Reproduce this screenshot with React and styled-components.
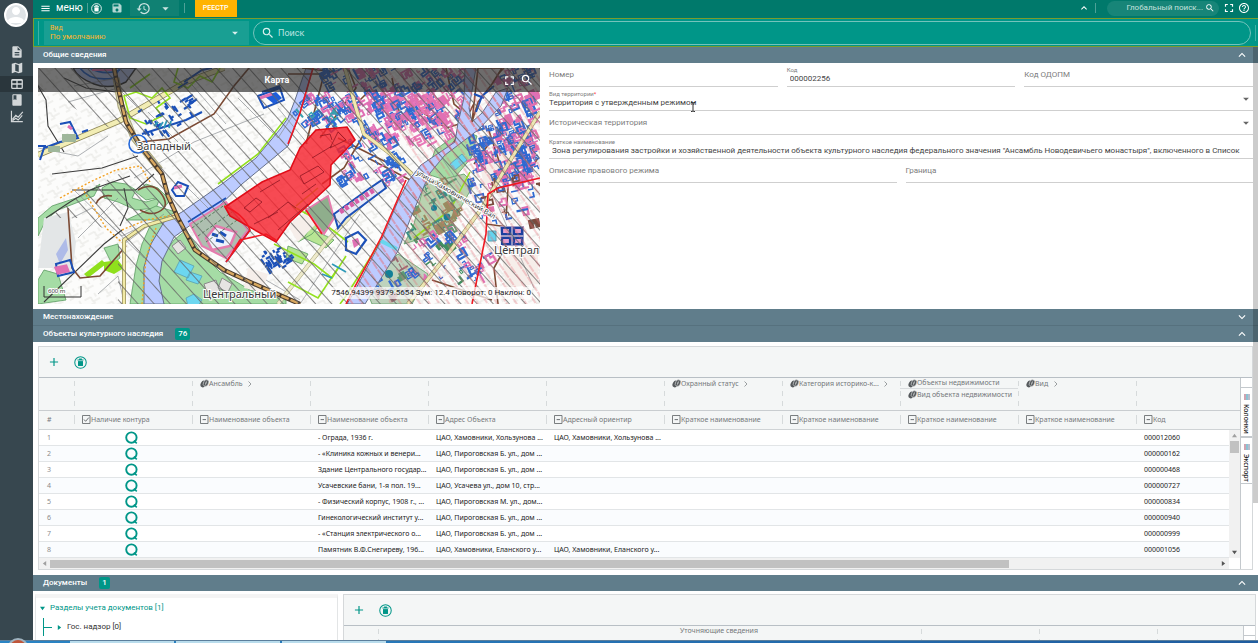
import React from 'react';
import styled, { createGlobalStyle, css } from 'styled-components';
import {
  MdMenu, MdSave, MdHistory, MdArrowDropDown, MdExpandLess, MdExpandMore, MdSearch,
  MdFullscreen, MdHelpOutline, MdAdd, MdDescription, MdMap, MdBook, MdPerson,
} from 'react-icons/md';

const teal = '#009688';
const ui = 'Roboto, "Liberation Sans", sans-serif';
const gridFont = '"Noto Sans", "Open Sans", sans-serif';

const Global = createGlobalStyle`
  *, *::before, *::after { box-sizing: border-box; }
  body { margin: 0; font: 8px/12px ${ui}; color: #444; background: #fff; }
  button, input, select { font: inherit; color: inherit; background: none; border: 0; padding: 0; margin: 0; outline: 0; border-radius: 0; }
  svg { display: block; flex: none; }
`;

const Screen = styled.div`
  display: flex;
  flex-direction: column;
  height: 100vh;
  overflow: hidden;
`;
const Workspace = styled.div`
  display: flex;
  flex: 1;
  min-height: 0;
`;

/* ---------- sidebar ---------- */
const Sidebar = styled.nav`
  flex: none;
  width: 33px;
  background: #37474f;
  display: flex;
  flex-direction: column;
`;
const Avatar = styled.button`
  width: 24px;
  height: 24px;
  margin: 3px 0 17px 4px;
  border-radius: 50%;
  background: #dfe3e6;
  border: 2px solid #fff;
  color: #fff;
  display: flex;
  justify-content: center;
  align-items: center;
  overflow: hidden;
`;
const SideButton = styled.button`
  height: 16px;
  display: flex;
  justify-content: center;
  align-items: center;
  color: #d3d7d9;
  background: ${p => (p.$active ? '#2a363c' : 'transparent')};
`;

/* ---------- top bars ---------- */
const Main = styled.main`
  position: relative;
  flex: 1;
  min-width: 0;
  display: flex;
  flex-direction: column;
`;
const TopBar = styled.header`
  flex: none;
  height: 18px;
  display: flex;
  align-items: center;
  padding: 0 6px 2px 7px;
  background: #00796b;
  color: #fff;
`;
const MenuButton = styled.button`
  display: flex;
  align-items: center;
  gap: 5px;
  padding-right: 3px;
  font-size: 10px;
  height: 16px;
`;
const BarButton = styled.button`
  display: flex;
  align-items: center;
  justify-content: center;
  width: ${p => p.$w || 16}px;
  height: 16px;
  opacity: ${p => (p.$dim ? 0.7 : 1)};
`;
const Divider = styled.span`
  width: 1px;
  height: 10px;
  margin: 0 ${p => p.$gap || 1}px;
  background: rgba(255, 255, 255, 0.3);
`;
const HistoryGroup = styled.div`
  display: flex;
  align-items: center;
  justify-content: space-between;
  width: 49px;
  height: 16px;
  margin: 0 4px 0 1px;
  padding: 0 6px;
  background: rgba(255, 255, 255, 0.08);
  opacity: 0.8;
`;
const RegistryTab = styled.button`
  height: 17px;
  width: 42px;
  margin: 0 0 0 9px;
  background: #ffb300;
  font-size: 7px;
  font-weight: 500;
  line-height: 16px;
  color: #fff;
`;
const Spacer = styled.span`flex: 1;`;
const GlobalSearch = styled.label`
  display: flex;
  align-items: center;
  gap: 2px;
  width: 112px;
  height: 15px;
  padding: 0 4px;
  margin: 0 2px 0 7px;
  border-radius: 8px;
  background: rgba(255, 255, 255, 0.09);
  input { width: 0; flex: 1; height: 12px; text-align: right; }
  input::placeholder { color: #c5e2de; opacity: 1; }
`;
const FilterBar = styled.div`
  flex: none;
  height: 29px;
  display: flex;
  align-items: center;
  gap: 4px;
  padding: 0 2px 0 4px;
  background: ${teal};
  border: solid #7b9c2d;
  border-width: 1px 0 1px 1px;
  &::after { content: ''; width: 1px; height: 16px; background: #3fb0a5; }
`;
const ViewPicker = styled.label`
  position: relative;
  display: flex;
  flex-direction: column;
  width: 211px;
  height: 24px;
  padding: 4px 0 0 11px;
  border-left: 1px solid #3fb0a5;
  background: linear-gradient(#199f93, #199f93) 5px 0 / 206px 24px no-repeat;
  color: #ffb52c;
  line-height: 6px;
  font-size: 7px;
  select { appearance: none; font-size: 8px; height: 12px; line-height: 12px; width: 190px; }
  svg { position: absolute; right: 7px; top: 5px; color: #d9efed; pointer-events: none; }
`;
const SearchBox = styled.label`
  flex: 1;
  display: flex;
  align-items: center;
  gap: 3px;
  height: 24px;
  padding-left: 7px;
  border: 1px solid #74c3bb;
  border-radius: 12px;
  color: #d9efed;
  font-size: 9px;
  input { flex: 1; height: 14px; }
  input::placeholder { color: #bfe4e0; opacity: 1; }
`;

/* ---------- sections ---------- */
const Scroll = styled.div`
  flex: 1;
  min-height: 0;
  overflow: hidden;
`;
const PageThumb = styled.div`
  position: absolute;
  right: 0;
  top: 47px;
  width: 5px;
  height: 456px;
  background: rgba(0, 0, 0, 0.2);
`;
const SectionHeader = styled.button`
  display: flex;
  align-items: center;
  width: 100%;
  height: ${p => (p.$line ? 17 : 16)}px;
  padding: 0 9px 0 10px;
  background: #607d8b;
  border-bottom: ${p => (p.$line ? '1px solid #56717e' : '0')};
  color: #fff;
  font-weight: 500;
  text-align: left;
`;
const Badge = styled.span`
  margin-left: 12px;
  padding: 0 3px;
  height: 12px;
  line-height: 12px;
  border-radius: 2px;
  background: ${teal};
`;
const GeneralBody = styled.div`
  position: relative;
  display: flex;
  padding-left: 5px;
`;
const MapPane = styled.div`
  position: relative;
  flex: none;
  width: 502px;
  height: 236px;
  margin: 5px 0;
  overflow: hidden;
`;
const MapHead = styled.div`
  position: absolute;
  inset: 0 0 auto 0;
  height: 24px;
  display: flex;
  align-items: center;
  justify-content: flex-end;
  padding-right: 4px;
  background: rgba(40, 40, 40, 0.66);
  color: #fff;
`;
const MapTitle = styled.strong`
  position: absolute;
  left: 0;
  right: 24px;
  text-align: center;
  font-size: 9px;
  font-weight: 700;
`;
const MapButton = styled.button`
  width: 18px;
  height: 18px;
  display: flex;
  align-items: center;
  justify-content: center;
`;
const MapStatus = styled.div`
  position: absolute;
  right: 8px;
  bottom: 5px;
  color: #222;
  background: rgba(255, 255, 255, 0.7);
  padding: 0 1px 0 3px;
`;

const Form = styled.form`
  flex: 1;
  min-width: 0;
  padding: 0 5px 0 9px;
`;
const FormRow = styled.div`
  display: grid;
  grid-template-columns: ${p => p.$cols || '1fr'};
  column-gap: 9px;
  height: 24px;
`;
const Field = styled.label`
  position: relative;
  display: grid;
  grid-template-rows: 10px 13px;
  min-width: 0;
  border-bottom: 1px solid #cfcfcf;
  input, select {
    grid-area: 2 / 1;
    width: 100%;
    min-width: 0;
    padding: 0 0 1px ${p => p.$indent || 0}px;
    appearance: none;
    line-height: 12px;
  }
  svg { position: absolute; right: 0; top: 5px; color: #666; }
`;
const Caption = styled.span`
  grid-column: 1;
  white-space: nowrap;
  color: #7d7d7d;
  ${p => (p.$floating
    ? css`grid-row: 1; font-size: 6px; line-height: 8px; padding-top: 3px; i { color: #f33; font-style: normal; }`
    : css`grid-row: 1 / 3; line-height: 23px;`)}
`;
const IBeam = styled.svg`
  position: absolute;
  left: 656px;
  top: 39px;
`;

/* ---------- data grid ---------- */
const GridBody = styled.div`
  padding: 4px 5px 5px;
`;
const GridFrame = styled.div`
  border: 1px solid #d5d8da;
  background: #fff;
`;
const GridTools = styled.div`
  height: 31px;
  display: flex;
  align-items: center;
  gap: 12px;
  padding-left: 7px;
  background: #f4f6f6;
  border-bottom: 1px solid #b8bfc5;
  color: ${teal};
`;
const ToolButton = styled.button`
  width: 15px;
  height: 15px;
  display: flex;
  align-items: center;
  justify-content: center;
`;
const GridSplit = styled.div`
  display: flex;
  font-family: ${gridFont};
  font-size: 7px;
  line-height: 10px;
`;
const GridView = styled.div`
  position: relative;
  flex: 1;
  min-width: 0;
`;
const Table = styled.table`
  width: 100%;
  table-layout: fixed;
  border-collapse: separate;
  border-spacing: 0;
`;
const tick = css`
  background-image: repeating-linear-gradient(#d6dadb 0 5px, transparent 5px 10px);
  background-size: 1px 100%;
  background-repeat: no-repeat;
`;
const GroupCell = styled.th`
  height: 33px;
  padding: 0;
  vertical-align: top;
  text-align: ${p => p.$align || 'left'};
  font-weight: 400;
  color: #74787b;
  border-bottom: 1px solid #c9cdd0;
  background-color: #f4f6f6;
  ${p => !p.$first && css`${tick} background-position: 0 3px;`}
`;
const GroupLine = styled.span`
  display: flex;
  align-items: center;
  height: 11px;
  padding-left: 8px;
  white-space: nowrap;
  border-bottom: ${p => (p.$rule ? '1px solid #d9dcde' : '0')};
`;
const ColCell = styled.th`
  height: 19px;
  padding: 0 0 1px 8px;
  text-align: left;
  font-weight: 400;
  color: #74787b;
  border-bottom: 1px solid #cfd3d5;
  background: #f4f6f6;
  ${p => !p.$first && css`
    background-image: linear-gradient(#d6dadb, #d6dadb);
    background-size: 1px 9px;
    background-position: 0 4px;
    background-repeat: no-repeat;
  `}
`;
const ColLabel = styled.span`
  display: flex;
  align-items: center;
  white-space: nowrap;
`;
const Row = styled.tr`
  background: ${p => (p.$even ? '#fafcfe' : '#fff')};
`;
const Cell = styled.td`
  height: 16px;
  padding: ${p => (p.$icon ? '0 0 0 51px' : '0 0 0 8px')};
  line-height: 15px;
  white-space: nowrap;
  overflow: hidden;
  color: ${p => (p.$muted ? '#8b8b8b' : '#222')};
  border-bottom: 1px solid #e2e5e7;
`;
const VBar = styled.div`
  position: absolute;
  right: 0;
  top: 52px;
  bottom: 11px;
  width: 11px;
  display: flex;
  flex-direction: column;
  align-items: center;
  justify-content: space-between;
  padding: 3px 0;
  background: #f1f1f1;
  &::before { content: ''; position: absolute; top: 11px; width: 9px; height: 12px; background: #c1c1c1; }
`;
const HBar = styled.div`
  display: flex;
  align-items: center;
  justify-content: space-between;
  height: 11px;
  margin-right: 11px;
  padding: 0 3px;
  background: #f1f1f1;
`;
const HThumb = styled.span`
  width: 81%;
  margin: 0 auto 0 3px;
  height: 8px;
  background: #c1c1c1;
`;
const SideTabs = styled.div`
  flex: none;
  width: 12px;
  padding-top: 9px;
  border-left: 1px solid #c4c9cd;
`;
const SideTab = styled.button`
  display: flex;
  align-items: center;
  gap: 4px;
  width: 11px;
  height: ${p => p.$h}px;
  padding: 6px 0 0;
  writing-mode: vertical-rl;
  border-top: 1px solid #c4c9cd;
  border-bottom: 1px solid #c4c9cd;
  color: #222;
  font-weight: 500;
  line-height: 9px;
  justify-content: flex-start;
`;

/* ---------- documents ---------- */
const DocsBody = styled.div`
  display: flex;
  gap: 5px;
  padding: 3px 2px 0;
`;
const TreePanel = styled.div`
  flex: none;
  width: 303px;
  height: 60px;
  border: solid #e3e5e6;
  border-width: 0 1px;
  border-top: 4px solid #f4f4f4;
`;
const TreeRoot = styled.a`
  display: flex;
  align-items: center;
  gap: 5px;
  height: 20px;
  padding: 0 0 0 4px;
  color: ${teal};
  text-decoration: none;
`;
const TreeChild = styled.a`
  display: flex;
  align-items: center;
  gap: 5px;
  height: 18px;
  margin-left: 7px;
  border-left: 1px solid ${teal};
  text-decoration: none;
  color: #333;
  &::before { content: ''; width: 8px; height: 1px; background: ${teal}; }
`;
const DocsGrid = styled(GridFrame)`
  flex: 1;
  height: 80px;
`;

/* ---------- desktop task bar ---------- */
const TaskBar = styled.div`
  position: relative;
  flex: none;
  display: flex;
  height: 3px;
  border-top: 1px solid #5c7f9c;
  background: linear-gradient(90deg, #2a84c4, #1f5c9f);
`;
const Task = styled.span`
  width: 104px;
  margin-left: 2px;
  background: #b9dcec;
  &:first-child { margin-left: 70px; }
`;
const StartOrb = styled.span`
  position: absolute;
  left: 8px;
  bottom: -14px;
  width: 20px;
  height: 19px;
  border-radius: 50%;
  border: 2px solid #9fb3bf;
  background: #c0563a;
`;

/* ---------- icons ---------- */
const TrashRing = ({ size = 12 }) => (
  <svg width={size} height={size} viewBox="0 0 24 24" fill="none" stroke="currentColor">
    <circle cx="12" cy="12" r="10.6" strokeWidth="1.9" />
    <path d="M6.4 7.4h11.2M9.4 5.4h5.2" strokeWidth="1.9" />
    <path d="M7.4 9.4h9.2v9H7.4z" fill="currentColor" stroke="none" />
  </svg>
);
const TableIcon = () => (
  <svg width="14" height="14" viewBox="0 0 24 24" fill="none" stroke="currentColor" strokeWidth="2.2">
    <rect x="3" y="4.5" width="18" height="15" rx="1.5" />
    <path d="M3 12h18M12 4.5v15M3 5.5h18" />
  </svg>
);
const ChartIcon = () => (
  <svg width="14" height="14" viewBox="0 0 24 24" fill="none" stroke="currentColor" strokeWidth="2">
    <path d="M2.5 3v18.5H22" />
    <path d="M4 18l6-7 4 3 8-9M4 20l6-4 4 3 7-8" />
  </svg>
);
const Coins = () => (
  <svg width="9" height="9" viewBox="0 0 18 18">
    <ellipse cx="6.5" cy="10" rx="5" ry="7" transform="rotate(28 6.5 10)" fill="#55595c" />
    <ellipse cx="12" cy="8" rx="5" ry="7" transform="rotate(28 12 8)" fill="#55595c" stroke="#f4f6f6" />
    <path d="M12.8 5l-1.8 6" stroke="#f4f6f6" strokeWidth="1.6" />
  </svg>
);
const TypeIcon = ({ check }) => (
  <svg width="9" height="9" viewBox="0 0 9 9" fill="none" stroke="#6c7073">
    <path d="M.5 .5h7.5v8H.5z" strokeWidth=".9" />
    <path d={check ? 'M2 4.5l1.6 1.8L6.8 2.6' : 'M2.6 4.6h3.4'} />
  </svg>
);
const LocateIcon = () => (
  <svg width="13" height="13" viewBox="0 0 13 13" fill="none" stroke={teal} strokeWidth="1.9">
    <circle cx="6.4" cy="6.6" r="5.2" />
    <path d="M8.8 9.6l3 2.8" strokeWidth="1.6" />
  </svg>
);
const Triangle = ({ dir = 'down', color = '#555', size = 5 }) => (
  <svg width={size} height={size} viewBox="0 0 6 6" fill={color}>
    <path d={{ down: 'M0 1h6L3 5z', up: 'M0 5h6L3 1z', left: 'M5 0v6L1 3z', right: 'M1 0v6l4-3z' }[dir]} />
  </svg>
);
const Bars = () => (
  <svg width="6" height="6" viewBox="0 0 6 6" strokeWidth="1.2">
    <path d="M1 0v6" stroke="#b0667c" /><path d="M3 0v6" stroke="#3d9bb5" /><path d="M5 0v6" stroke="#8a8faa" />
  </svg>
);
const Chevron = () => (
  <svg width="4" height="6" viewBox="0 0 4 6" fill="none" stroke="#9a9ea0"><path d="M.5 .5L3 3 .5 5.5" /></svg>
);

/* ---------- map ---------- */
const seeded = seed => () => {
  seed = (seed * 16807) % 2147483647;
  return seed / 2147483647;
};
const shapes = [
  'M0 0h6v4h-6z', 'M0 0h8v3h-5v4h-3z', 'M0 0h9v7h-3v-4h-3v4h-3z', 'M0 0h5v5', 'M0 0v7h7', 'M0 0h4v3h3v5h-7z', 'M0 0h10',
];
// Each district: x, y, width, height, number of buildings, rotation, palette.
const districts = [
  [274, 0, 90, 58, 120, -28, ['#e070b4', '#e070b4', '#2f6ad2', '#2f6ad2']],
  [330, 25, 80, 48, 130, -28, ['#e070b4', '#e878ba', '#2f6ad2']],
  [370, 0, 56, 55, 70, -38, ['#e070b4', '#e070b4', '#2f6ad2']],
  [462, 0, 36, 110, 120, -22, ['#e070b4', '#e070b4', '#2f6ad2', '#2f6ad2']],
  [432, 60, 62, 60, 90, -18, ['#e070b4', '#2f6ad2', '#2f6ad2']],
  [440, 110, 58, 46, 34, -12, ['#2f6ad2', '#e070b4', '#7a4b3e']],
  [304, 75, 62, 40, 44, -30, ['#2f6ad2', '#2f6ad2', '#e070b4']],
  [256, 28, 45, 28, 20, -40, ['#2f6ad2', '#2f6ad2', '#37a0b0']],
  [372, 160, 56, 50, 34, -38, ['#2f6ad2', '#e070b4', '#3f8f60']],
  [425, 160, 24, 50, 18, -30, ['#2f6ad2', '#2f6ad2', '#e070b4']],
  [372, 112, 50, 50, 46, -30, ['#5d9a72', '#9b8a60', '#3f8f86']],
  [335, 190, 40, 36, 22, -30, ['#5d9a72', '#9b6a70', '#2f6ad2']],
];
const rnd = seeded(4271);
const buildings = districts.flatMap(([x, y, w, h, n, a, colors]) =>
  Array.from({ length: n }, () => {
    const c = colors[Math.floor(rnd() * colors.length)];
    return {
      d: shapes[Math.floor(rnd() * shapes.length)],
      x: Math.round(x + rnd() * w),
      y: Math.round(y + rnd() * h),
      a: a + Math.round(rnd() * 4) * 90,
      s: 0.5 + rnd() * 0.7,
      c,
      fill: c !== '#2f6ad2' && rnd() > 0.7,
    };
  }));
const blockRnd = seeded(99);
const blueBlocks = [
  [100, 44, 40, 20, 20], [120, 30, 34, 14, 16], [222, 182, 30, 18, 34],
].flatMap(([x, y, w, h, n]) => Array.from({ length: n }, () => [
  Math.round(x + blockRnd() * w), Math.round(y + blockRnd() * h), blockRnd() > 0.5 ? -32 : 58, 3 + Math.round(blockRnd() * 5),
]));

const river1 = 'M268 0L257 32 250 50 243 60 218 90 184 116 164 130 144 144 126 154 113 176 106 199 106 236 126 236 121 213 124 193 136 169 154 156 178 141 204 116 250 78 262 45 275 0z';
const river2 = 'M427 0L426 30 420 55 417 74 383 97 371 112 360 133 343 173 315 226 309 236 327 236 360 183 373 149 387 116 392 105 407 87 440 62 463 38 470 20 458 24 444 45 434 54 431 40 438 0z';
const redZone = 'M278 62L309 59 317 72 293 97 292 117 252 154 238 174 192 148 187 139 224 114 252 102 262 80z';

const CityMap = () => (
  <svg width="100%" height="236" viewBox="0 0 502 236" preserveAspectRatio="xMinYMin slice" role="img" aria-label="Карта территории">
    <defs>
      <pattern id="hatch" width="12" height="12" patternUnits="userSpaceOnUse" patternTransform="rotate(-42)">
        <path d="M.5 0v12" stroke="#666" strokeWidth="1" />
      </pattern>
      <pattern id="redHatch" width="8" height="9" patternUnits="userSpaceOnUse" patternTransform="rotate(-34)">
        <path d="M1 0v9" stroke="#e2707a" strokeWidth="1" strokeDasharray="5 1" />
      </pattern>
      <pattern id="plots" width="17" height="14" patternUnits="userSpaceOnUse" patternTransform="rotate(-28)">
        <path d="M0 3h7v5h8M4 10h5M12 1v4" stroke="#e4e4e0" fill="none" />
      </pattern>
      <clipPath id="river2clip"><path d={river2} /></clipPath>
    </defs>
    <rect width="502" height="236" fill="#fcfcfb" />
    <rect width="502" height="236" fill="url(#plots)" />

    <g fill="#a5dca5" stroke="#5c9c62" strokeWidth=".8">
      <path d="M0 150L14 138 44 128 62 116 56 128 20 142 8 152 0 168z" />
      <path d="M64 120l10-6 14 2 10 6-4 8 14 4 14-4-4 10-20 2-18-8-14-4z" />
      <path d="M98 124l10-8 12 4 12 12-6 8-8-10-10 2z" />
      <path d="M88 152l30-14 20 6 -16 8z" />
      <path d="M120 154L112 158 104 176 98 198 92 236 108 236 106 200 113 176 126 156z" />
      <path d="M0 212l6-10 14 4 8 26-28 4z" />
      <path d="M66 180l14-4 2 14-8 6z" />
      <path d="M136 172l12-10 16 24 18 18 30 18 36 10v4h-122l-8-22 4-22z" />
      <path d="M397 82l28-20 14 6-6 22-20 24-24-8z" />
      <path d="M386 116l40-10 10 10-26 46-44 14 10-20z" fill="#b9d3b0" />
      <path d="M330 226l12-24 18-16 30 20-16 30h-40z" fill="#bed3bd" />
      <path d="M268 140l20 10-14 16-14 8z M250 178l20 8-6 10-16-6z M272 160l24 12-8 8-22-10z" fill="#b8e594" />
    </g>
    <path d="M6 150l24-6 8 30-4 36-20-10-14 0z" fill="#e3e6e7" />
    <path d="M18 186l10-16 2 12-8 14z" fill="#aebbe8" />
    <g fill="#f6eeea">
      <path d="M250 158l24-18 8 12-22 22z M440 88l30-6 6 24-30 12z M464 190l36-8v34l-32 4z M210 200l20 6-6 18-18-4z" />
    </g>
    <path d="M46 206l18-14 4 4-18 14z M66 194l14-2 6 8-10 6-10-4z" fill="#8fe01c" />

    <path d="M35 0Q40 10 56 16Q72 22 88 14L98 0z" fill="#b9c6f4" stroke="#333" strokeWidth="1.4" />
    <path d="M42 0q10 14 34 10l6-10M52 0q14 8 30 2" fill="none" stroke="#1f62d0" strokeWidth="1.6" />
    <path d="M54 2h24" stroke="#e070b4" strokeWidth="2" />

    <path d={river1} fill="#bccbff" stroke="#65708c" strokeWidth="1" />

    <g fill="none" stroke="#8b8f93" strokeWidth=".7">
      <path d="M36 18l44-8 M30 34l50-14 20 20 M0 80l40 8 30-20 M110 44l30 30 M148 10l40 46 M96 110l60-36 70-28 M200 30l40 40 30-46" />
      <path d="M34 150l20-10 30 28 20-10 M40 170l40-40 M36 122l70 68 M86 176l40-30 M60 226l20-18 6 26 M150 120l40 40" />
      <path d="M246 228l70-88 M262 236l60-90 M228 212l34 20 M240 40l30 36 M384 60l40 60 M452 120l44 100" />
    </g>
    <g stroke="#3c3c3c" strokeWidth="1.1" fill="none">
      <path d="M0 18l8 14 2 26 16 26 M26 10l22 10 30 4 M34 122l64 0 18-16 M8 150l24-16 20-12 40-14M14 106l50-6 36-12 M86 120l4 20-8 18 M6 234l60-58 18-14" />
    </g>
    <g fill="none" stroke="#f2a124" strokeWidth="1.4" strokeDasharray="2 2">
      <path d="M22 130l30-16 26-12 24-4 10 16 M44 120l24 40 20 18 M84 162l24-10 34-6 M118 160l-10 30-4 46" />
    </g>
    <g fill="none" stroke="#7b4a34" strokeWidth="1.6">
      <path d="M211 0L196 18 176 46 131 71 102 74" />
      <path d="M30 140l4 60 8 10 20-2 26-30M58 136q4-10 16-8 M100 122q14-8 22 2t4 16q-10 10-24 2" />
      <path d="M250 6h36l-18 70M264 0l34 4 M310 0l8 20 -36 50 M330 90l46 24 40-40 26-50 24-24 M430 48l-14-12-8-36" />
      <path d="M284 116l22-16 20-34 M378 40l30 20 20-6 M450 60l20 60-2 30 M448 156l30 4-22 40 4 36 M480 120l20-30 M330 24l-20 20M354 10l10 50 M300 70l60 30M470 50l-34 46M394 212l60 20" />
    </g>
    <g fill="none">
      <path d="M0 87L81 53 148 14 186 0" stroke="#8d8555" strokeWidth="6" /><path d="M0 87L81 53 148 14 186 0" stroke="#f2edb4" strokeWidth="4.4" />
      <path d="M78 10L83 38 96 70 122 102" stroke="#a8a27a" strokeWidth="7" /><path d="M78 10L83 38 96 70 122 102" stroke="#dedcb0" strokeWidth="5" />
      <path d="M240 236L290 172 330 130" stroke="#a9a77e" strokeWidth="4" /><path d="M240 236L290 172 330 130" stroke="#eeeacb" strokeWidth="3" />
      <path d="M86 236L86 172 106 158 140 148" stroke="#8d8555" strokeWidth="4" /><path d="M86 236L86 172 106 158 140 148" stroke="#f1eaa6" strokeWidth="2.6" />
    </g>
    <g fill="none" stroke="#93e01e" strokeWidth="1.6">
      <path d="M86 28l12-4 16 6 10-10 8 10-14 10 6 8-16 8-16-6zM140 0l-4 14 14 6 12-12 12 6 8-14 M92 20l20-14M248 50l-28 36-40 30M254 138l30 16 26 20M236 176l40 20 18 14 14-22 M280 120l-22 18M250 214l30 16 20-30M376 170l36-28 20-38M342 174l-34 54-6 8" />
    </g>
    <g fill="none" stroke="#1b50b8" strokeWidth="2">
      <path d="M22 56l10-2 8 16-18 4-16 6-4 12M0 78h8M44 64l6-2" />
      <path d="M146 14l18-12 10-2M140 20l10-6M104 66l44-14 16-8M220 28l22-8 4 12-20 8z M224 24l18-6" />
      <path d="M18 196l14-4 4 12-16 4zM134 122l6-8 10 4-4 10-8 0z" />
    </g>
    <path d="M24 66h14v8h-14z M10 78h12v6h-12z" fill="#9fb79b" />
    <path d="M226 28l12-4 6 6-8 6z" fill="#1f5edb" />
    <path d="M222 30l12-4" stroke="#e070b4" strokeWidth="3" />
    <path d="M18 200l10-2 2 5-10 2zM136 120l8-2M30 58l4 3" stroke="#e070b4" strokeWidth="3" fill="#e070b4" />
    <g stroke="#1b50b8" strokeWidth="2.2">
      {blueBlocks.map(([x, y, a, l], i) => (
        <path key={i} d={`M0 0h${l}`} transform={`translate(${x} ${y}) rotate(${a})`} />
      ))}
    </g>
    <g fill="none" stroke="#2f9ab8" strokeWidth="1.8">
      <path d="M116 58l4-4M121 60l4-6M126 60l3-8M131 60l2-7" />
      <path d="M294 196l14 8M284 206l10 4" />
    </g>
    <g>
      {buildings.map((b, i) => (
        <path
          key={i}
          d={b.d}
          stroke={b.c}
          fill={b.fill ? b.c : 'none'}
          transform={`translate(${b.x} ${b.y}) rotate(${b.a}) scale(${b.s})`}
          strokeWidth="1.9"
        />
      ))}
    </g>
    <g fill="none">
      <path d="M307 0L318 40 326 66 350 84 374 106" stroke="#8d8555" strokeWidth="4" /><path d="M307 0L318 40 326 66 350 84 374 106" stroke="#f1e8b0" strokeWidth="3" />
      <path d="M502 44L470 96 444 140 410 186 370 236" stroke="#8d8555" strokeWidth="4" /><path d="M502 44L470 96 444 140 410 186 370 236" stroke="#ece7b5" strokeWidth="3" />
      <path d="M76 0L81 24 88 54 101 76 124 106 130 128 140 150 157 182 186 202 212 214 262 236" stroke="#4b3c2e" strokeWidth="4.6" />
      <path d="M76 0L81 24 88 54 101 76 124 106 130 128 140 150 157 182 186 202 212 214 262 236" stroke="#d8a860" strokeWidth="2.4" strokeDasharray="8 2" />
    </g>

    <path d="M152 156l36-22 22 28-22 28-24-12z" fill="#aebfb0" stroke="#e57cae" strokeWidth="2" />
    <path d="M168 170l10-12 20 6-6 14-18 4z" fill="#eef2fb" stroke="#e57cae" strokeWidth="2.6" />
    <path d="M174 166l6 2M182 164l6 4M178 172l8 2" stroke="#1b50b8" strokeWidth="3" />
    <path d="M154 160l34-24M160 168l34-24M168 174l34-24" stroke="#557a5b" strokeDasharray="3 2" />
    <path d="M150 154l38-24M212 162l-24 32" stroke="#1b50b8" strokeWidth="1.6" />
    <path d="M268 142l22-14 6 22-10 16z" fill="#8fae8c" stroke="#e57cae" strokeWidth="2" />
    <path d="M296 146l36-26 12-8 4 8-40 30-8 10z" fill="#e8eaf8" stroke="#1b50b8" strokeWidth="2" />
    <path d="M302 144l34-22" stroke="#d65fa8" strokeWidth="5" strokeDasharray="4 2" />
    <path d="M308 170l12-6 8 8-10 14-10-4z" fill="none" stroke="#1b50b8" strokeWidth="2.2" />
    <path d="M314 172l6-2 2 6-6 4z" fill="#e070b4" />

    <path d={river2} fill="#bccbff" stroke="#65708c" />
    <path d="M434 54l6-20 14-18 10-16h-24z" fill="#f5efef" stroke="#7b4a34" strokeWidth="1.6" />
    <path d="M438 44l6-16 12-10M436 26l10 4" stroke="#1b50b8" strokeWidth="2" fill="none" />
    <rect width="502" height="236" fill="url(#redHatch)" clipPath="url(#river2clip)" />
    <path d="M343 173l16 8" stroke="#69d6ee" strokeWidth="4" />

    <path d="M142 192l14 6-6 12-14-6z M152 204l12 4-4 8-12-4z M148 230l8-4 8 6-4 6h-10z M412 96l12-10 5 6-12 10z" fill="#6cd7f0" stroke="#5a9fb0" strokeWidth=".8" />
    <path d="M450 163h8v10h-8z" fill="#64d3ee" stroke="#5a9fb0" />
    <path d="M134 178l8-6 6 8-8 6z M166 216l12-4 4 12-12 4z M184 210l10 6-4 8-10-4z" fill="#e6e4e2" stroke="#8b8b8b" />
    <path d="M462 158h24v20h-22z" fill="#9e9ec8" />
    <path d="M464 160h8v6h-8zM476 160h8v6h-8zM464 170h8v6h-8zM476 170h8v6h-8z" fill="#e3a0d0" stroke="#1b3f9f" strokeWidth="2.2" />
    <circle cx="396" cy="140" r="3" fill="#128097" /><circle cx="409" cy="149" r="3.4" fill="#128097" /><circle cx="351" cy="206" r="4" fill="#128097" />

    <path d="M100 76m-9 0a9 9 0 1 0 18 0a9 9 0 1 0-18 0" fill="none" stroke="#2468d8" strokeWidth="1.6" />
    <path d="M40 0H502V236H80V166L40 150 10 150 60 116 98 98 90 70 0 20V0z" fill="url(#hatch)" opacity=".8" />
    <path d="M320 0h182v236H350L380 100z" fill="url(#redHatch)" opacity=".65" />

    <path d={redZone} fill="#f5222d" fillOpacity=".82" stroke="#e00d18" strokeWidth="1.6" />
    <g stroke="#8c1420" fill="none" opacity=".75">
      <path d="M282 68l10-2 2 6M300 64l8 8-16 8zM274 90l20-12 M262 108l18-10 6 6-20 12z M222 124l20-12M206 140l12-10 6 4-12 10z M230 150l20-16 8 6 M216 156l24-12M240 162l30-26M264 126l14-10" />
    </g>
    <path d="M186 138q20 8 26 24L188 194M238 172l-10-6-26 6-12 20M268 142l16 24M368 112L343 170 314 224 308 236M275 0L262 45 250 76M460 120l42-10M434 236l14-70 2-40 10-6" fill="none" stroke="#f01822" strokeWidth="1.6" />

    <g fontFamily='"Noto Sans", sans-serif' fontSize="11" fill="#3a3a3a" stroke="#fff" strokeWidth="2" paintOrder="stroke">
      <text x="99" y="82">Западный</text>
      <text x="165" y="230">Центральный</text>
      <text x="456" y="186">Централ</text>
      <text fontSize="7" transform="translate(378 106) rotate(30)">улица Хамовнический Вал</text>
      <text x="10" y="225" fontSize="6">600 m</text>
    </g>
    <path d="M6 218v11h37v-11" fill="none" stroke="#333" />
  </svg>
);

/* ---------- data ---------- */
const groups = [
  [], [], ['Ансамбль'], [], [], [], ['Охранный статус'], ['Категория историко-к...'],
  ['Объекты недвижимости', 'Вид объекта недвижимости'], ['Вид'], [],
];
const columns = [
  'Наличие контура', 'Наименование объекта', 'Наименование объекта', 'Адрес Объекта', 'Адресный ориентир',
  'Краткое наименование', 'Краткое наименование', 'Краткое наименование', 'Краткое наименование', 'Код',
];
const rows = [
  ['- Ограда, 1936 г.', 'ЦАО, Хамовники, Хользунова ...', 'ЦАО, Хамовники, Хользунова ...', '000012060'],
  ['- «Клиника кожных и венери...', 'ЦАО, Пироговская Б. ул., дом ...', '', '000000162'],
  ['Здание Центрального государ...', 'ЦАО, Пироговская Б. ул., дом ...', '', '000000468'],
  ['Усачевские бани, 1-я  пол. 19...', 'ЦАО, Усачева ул., дом 10, стр...', '', '000000727'],
  ['- Физический корпус, 1908 г., ...', 'ЦАО, Пироговская М. ул., дом...', '', '000000834'],
  ['Гинекологический институт у...', 'ЦАО, Пироговская Б. ул., дом ...', '', '000000940'],
  ['- «Станция электрического о...', 'ЦАО, Пироговская Б. ул., дом ...', '', '000000999'],
  ['Памятник В.Ф.Снегиреву, 196...', 'ЦАО, Хамовники, Еланского у...', 'ЦАО, Хамовники, Еланского у...', '000001056'],
];

const TextField = ({ label, value, indent }) => (
  <Field $indent={indent}>
    <Caption $floating={!!value}>{label}</Caption>
    <input type="text" defaultValue={value} />
  </Field>
);
const SelectField = ({ label, value, required }) => (
  <Field>
    <Caption $floating={!!value}>{label}{required && <i>*</i>}</Caption>
    <select defaultValue={value || ''}><option>{value || ''}</option></select>
    <MdArrowDropDown size={14} />
  </Field>
);
const Section = ({ title, badge, open = true }) => (
  <SectionHeader type="button" $line={!open} aria-expanded={open}>
    {title}
    {badge && <Badge>{badge}</Badge>}
    <Spacer />
    {open ? <MdExpandLess size={14} /> : <MdExpandMore size={14} />}
  </SectionHeader>
);
const Tools = () => (
  <GridTools>
    <ToolButton aria-label="Добавить"><MdAdd size={14} /></ToolButton>
    <ToolButton aria-label="Удалить"><TrashRing size={13} /></ToolButton>
  </GridTools>
);

const ObjectsGrid = () => (
  <GridFrame>
    <Tools />
    <GridSplit>
      <GridView>
        <Table>
          <colgroup>
            <col width="35" />
            {columns.slice(0, -1).map((_, i) => <col key={i} width="118" />)}
            <col />
          </colgroup>
          <thead>
            <tr>
              {groups.map((lines, i) => (
                <GroupCell key={i} $first={i === 0}>
                  {lines.map((t, k) => (
                    <GroupLine key={t} $rule={lines.length > 1 && k === 0}>
                      <Coins />{t}
                      {lines.length === 1 && <><span>&nbsp;&nbsp;&nbsp;</span><Chevron /></>}
                    </GroupLine>
                  ))}
                </GroupCell>
              ))}
            </tr>
            <tr>
              <ColCell $first>#</ColCell>
              {columns.map((t, i) => (
                <ColCell key={i}><ColLabel><TypeIcon check={i === 0} />{t}</ColLabel></ColCell>
              ))}
            </tr>
          </thead>
          <tbody>
            {rows.map(([name, address, landmark, code], i) => (
              <Row key={code} $even={i % 2 === 1}>
                <Cell $muted>{i + 1}</Cell>
                <Cell $icon><LocateIcon /></Cell>
                <Cell />
                <Cell>{name}</Cell>
                <Cell>{address}</Cell>
                <Cell>{landmark}</Cell>
                <Cell /><Cell /><Cell /><Cell />
                <Cell>{code}</Cell>
              </Row>
            ))}
          </tbody>
        </Table>
        <VBar><Triangle dir="up" color="#a0a0a0" /><Triangle /></VBar>
        <HBar><Triangle dir="left" color="#a0a0a0" /><HThumb /><Triangle dir="right" /></HBar>
      </GridView>
      <SideTabs>
        <SideTab $h={50}><Bars />Колонки</SideTab>
        <SideTab $h={47}><Bars />Экспорт</SideTab>
      </SideTabs>
    </GridSplit>
  </GridFrame>
);

export default function App() {
  return (
    <Screen>
      <Global />
      <Workspace>
        <Sidebar>
          <Avatar aria-label="Профиль"><MdPerson size={24} /></Avatar>
          <SideButton aria-label="Документы"><MdDescription size={14} /></SideButton>
          <SideButton aria-label="Карта"><MdMap size={14} /></SideButton>
          <SideButton aria-label="Таблица" $active><TableIcon /></SideButton>
          <SideButton aria-label="Справочник"><MdBook size={14} /></SideButton>
          <SideButton aria-label="Отчёты"><ChartIcon /></SideButton>
        </Sidebar>
        <Main>
          <TopBar>
            <MenuButton><MdMenu size={11} />меню</MenuButton>
            <Divider />
            <BarButton aria-label="Удалить"><TrashRing size={11} /></BarButton>
            <BarButton aria-label="Сохранить" $w={24} $dim><MdSave size={12} /></BarButton>
            <HistoryGroup><MdHistory size={15} /><MdArrowDropDown size={15} /></HistoryGroup>
            <Divider />
            <RegistryTab>РЕЕСТР</RegistryTab>
            <Spacer />
            <BarButton aria-label="Свернуть" $w={14}><MdExpandLess size={12} /></BarButton>
            <Divider $gap={4} />
            <GlobalSearch>
              <input type="text" placeholder="Глобальный поиск..." aria-label="Глобальный поиск" />
              <MdSearch size={10} />
            </GlobalSearch>
            <BarButton aria-label="Во весь экран" $w={15}><MdFullscreen size={14} /></BarButton>
            <BarButton aria-label="Справка"><MdHelpOutline size={12} /></BarButton>
          </TopBar>
          <FilterBar>
            <ViewPicker>
              Вид
              <select defaultValue="По умолчанию"><option>По умолчанию</option></select>
              <MdArrowDropDown size={14} />
            </ViewPicker>
            <SearchBox>
              <MdSearch size={14} />
              <input type="text" placeholder="Поиск" aria-label="Поиск" />
            </SearchBox>
          </FilterBar>
          <Scroll>
            <Section title="Общие сведения" />
            <GeneralBody>
              <MapPane>
                <CityMap />
                <MapHead>
                  <MapTitle>Карта</MapTitle>
                  <MapButton aria-label="Развернуть карту"><MdFullscreen size={15} /></MapButton>
                  <MapButton aria-label="Найти на карте"><MdSearch size={14} /></MapButton>
                </MapHead>
                <MapStatus>7546.94399 9379.5654 Зум: 12.4 Поворот: 0 Наклон: 0</MapStatus>
              </MapPane>
              <Form>
                <FormRow $cols="1fr 1fr 1fr">
                  <TextField label="Номер" />
                  <TextField label="Код" value="000002256" indent={3} />
                  <TextField label="Код ОДОПМ" />
                </FormRow>
                <FormRow><SelectField label="Вид территории" value="Территория с утвержденным режимом" required /></FormRow>
                <FormRow><SelectField label="Историческая территория" /></FormRow>
                <FormRow>
                  <TextField
                    label="Краткое наименование"
                    indent={3}
                    value={'Зона регулирования застройки и хозяйственной деятельности объекта культурного наследия федерального значения "Ансамбль Новодевичьего монастыря", включенного в Список'}
                  />
                </FormRow>
                <FormRow $cols="1fr 1fr">
                  <TextField label="Описание правового режима" />
                  <TextField label="Граница" />
                </FormRow>
              </Form>
              <IBeam width="8" height="10" viewBox="0 0 8 10" fill="none" stroke="#333">
                <path d="M2 .5h1.5l.5 .5 .5-.5H6M4 1v8M2 9.5h1.5L4 9l.5 .5H6" />
              </IBeam>
            </GeneralBody>
            <Section title="Местонахождение" open={false} />
            <Section title="Объекты культурного наследия" badge="76" />
            <GridBody><ObjectsGrid /></GridBody>
            <Section title="Документы" badge="1" />
            <DocsBody>
              <TreePanel>
                <TreeRoot href="#sections"><Triangle color={teal} />Разделы учета документов [1]</TreeRoot>
                <TreeChild href="#supervision"><Triangle dir="right" color={teal} />Гос. надзор [0]</TreeChild>
              </TreePanel>
              <DocsGrid>
                <Tools />
                <GridSplit>
                  <GridView>
                    <Table>
                      <colgroup>
                        <col width="34" /><col width="139" /><col width="404" /><col width="118" /><col width="118" /><col />
                      </colgroup>
                      <thead>
                        <tr>
                          <GroupCell $first />
                          <GroupCell />
                          <GroupCell $first $align="center">Уточняющие сведения</GroupCell>
                          <GroupCell /><GroupCell /><GroupCell />
                        </tr>
                      </thead>
                    </Table>
                  </GridView>
                  <SideTabs><SideTab $h={50} aria-label="Колонки" /></SideTabs>
                </GridSplit>
              </DocsGrid>
            </DocsBody>
          </Scroll>
          <PageThumb />
        </Main>
      </Workspace>
      <TaskBar>
        <Task /><Task /><Task />
        <StartOrb />
      </TaskBar>
    </Screen>
  );
}
